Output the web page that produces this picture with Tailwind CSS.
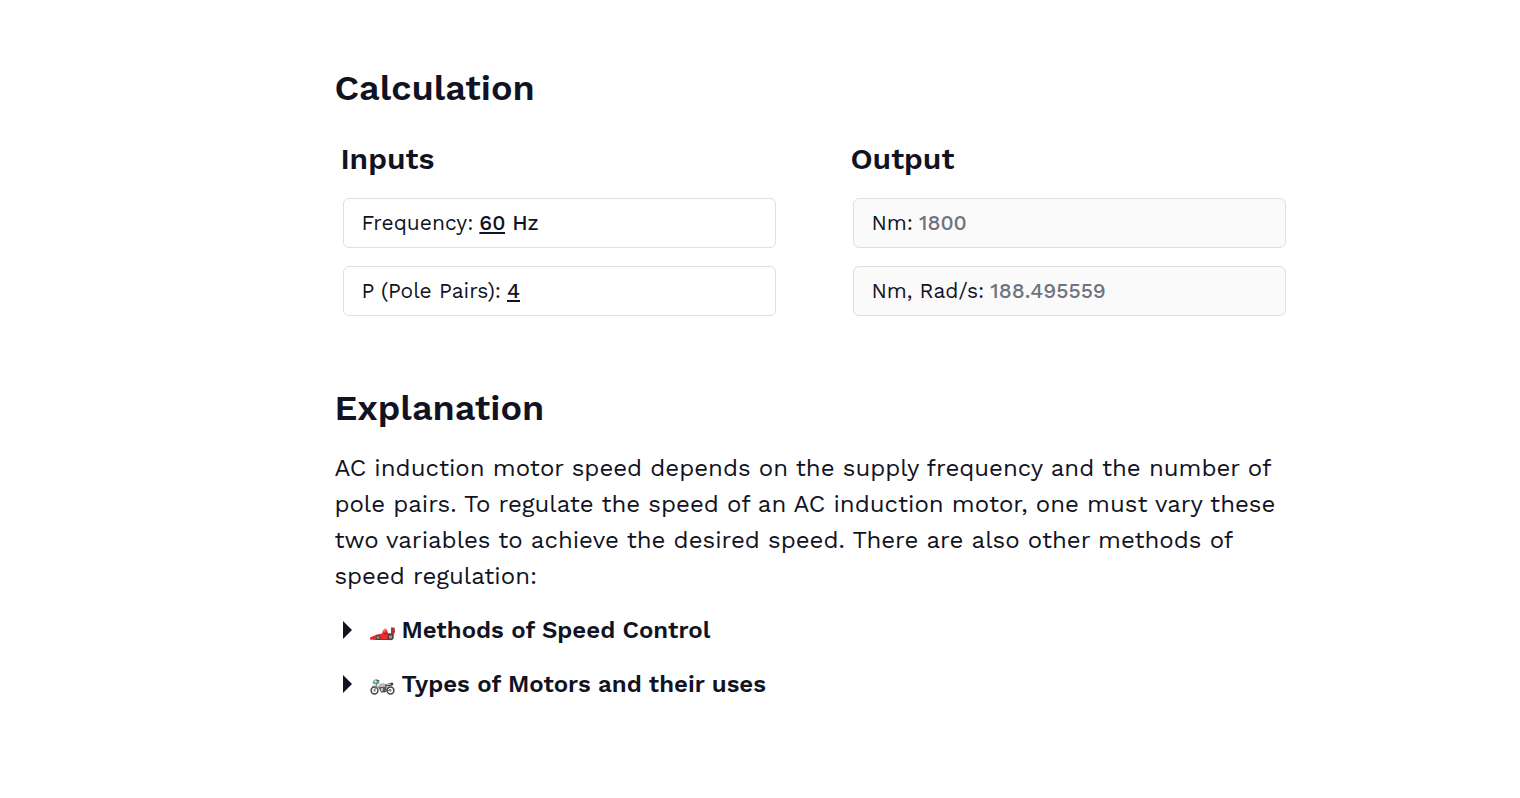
<!DOCTYPE html>
<html lang="en">
<head>
    <meta charset="UTF-8">
    <meta name="viewport" content="width=device-width, initial-scale=1.0">
    <title>Motor Speed Calculator</title>
    <script src="https://cdn.jsdelivr.net/npm/@tailwindcss/browser@4"></script>
</head>
<body class="bg-white font-['Work_Sans',Inter,sans-serif] text-[#111322]">
    <main class="ml-[22%] mr-8 max-w-[952px] pt-16 pb-20">
        <section>
            <h2 class="text-4xl leading-12 font-semibold">Calculation</h2>
            <div class="grid grid-cols-2 gap-[68px] mt-6">
                <div class="flex flex-col">
                    <h3 class="ml-1.5 text-3xl leading-[46px] font-semibold">Inputs</h3>
                    <div class="flex flex-col gap-[18px] mt-4 ml-[9px]">
                        <div class="flex items-center gap-1.5 h-[50px] px-[17px] border border-[#dfdfe2] rounded-md text-[21px]">
                            <label for="frequency">Frequency:</label>
                            <span class="font-medium"><input type="text" id="frequency" value="60" class="field-sizing-content underline underline-offset-2 decoration-2"> Hz</span>
                        </div>
                        <div class="flex items-center gap-1.5 h-[50px] px-[17px] border border-[#dfdfe2] rounded-md text-[21px]">
                            <label for="polePairs">P (Pole Pairs):</label>
                            <input type="text" id="polePairs" value="4" class="field-sizing-content font-medium underline underline-offset-2 decoration-2">
                        </div>
                    </div>
                </div>
                <div class="flex flex-col">
                    <h3 class="ml-1.5 text-3xl leading-[46px] font-semibold">Output</h3>
                    <div class="flex flex-col gap-[18px] mt-4 ml-[9px]">
                        <div class="flex items-center gap-1.5 h-[50px] px-[17px] border border-[#dfdfe2] rounded-md bg-[#fafafa] text-[21px]">
                            <label for="speed">Nm:</label>
                            <output id="speed" class="font-medium text-[#70727d]">1800</output>
                        </div>
                        <div class="flex items-center gap-1.5 h-[50px] px-[17px] border border-[#dfdfe2] rounded-md bg-[#fafafa] text-[21px]">
                            <label for="speedRad">Nm, Rad/s:</label>
                            <output id="speedRad" class="font-medium text-[#70727d]">188.495559</output>
                        </div>
                    </div>
                </div>
            </div>
        </section>

        <section class="mt-[68px]">
            <h2 class="text-4xl leading-12 font-semibold">Explanation</h2>
            <p class="mt-[18px] text-2xl leading-9">AC induction motor speed depends on the supply frequency and the number of pole pairs. To regulate the speed of an AC induction motor, one must vary these two variables to achieve the desired speed. There are also other methods of speed regulation:</p>
            <details class="mt-[18px] group">
                <summary class="flex items-center pl-[9px] text-2xl leading-9 font-semibold cursor-pointer">
                    <svg class="w-2.5 h-[18px] mr-4 group-open:rotate-90" viewBox="0 0 10 18" fill="currentColor"><path d="M0 0L9 9L0 18Z"/></svg>
                    <svg class="w-7 h-6 mr-1" viewBox="1 -1 28 24">
                        <path d="M23 8.5h3.500l.5 4-1.500 4h-2.500z" fill="#c32634"/>
                        <path d="M24 10h2v2h-2z" fill="#74465c"/>
                        <path d="M2 20l1-2 6-2.500 5-1 1-3 2-1.500 2 1 1 3 4 .5 1.500 2-1 3-6 1-12 .5z" fill="#ef2b2f"/>
                        <path d="M15 13l1-3 1.500-.5 1 1.500-2 2.500z" fill="#ff6466"/>
                        <path d="M15 14.500l4-1 1 1.500-4 .8z" fill="#b21d27"/>
                        <path d="M2 18.500h4v2h-4z" fill="#e12631"/>
                        <path d="M8 20h14l-1 1h-12z" fill="#8b3034"/>
                        <circle cx="10" cy="18.500" r="2.500" fill="#49413c"/>
                        <circle cx="10" cy="18.500" r="1.300" fill="#a49a88"/>
                        <circle cx="22.500" cy="18" r="3.200" fill="#49413c"/>
                        <circle cx="22.500" cy="18" r="1.700" fill="#a49a88"/>
                    </svg>
                    Methods of Speed Control
                </summary>
            </details>
            <details class="mt-[18px] group">
                <summary class="flex items-center pl-[9px] text-2xl leading-9 font-semibold cursor-pointer">
                    <svg class="w-2.5 h-[18px] mr-4 group-open:rotate-90" viewBox="0 0 10 18" fill="currentColor"><path d="M0 0L9 9L0 18Z"/></svg>
                    <svg class="w-7 h-6 mr-1" viewBox="1 -1 28 24" fill="none">
                        <circle cx="6.500" cy="17.500" r="3.400" stroke="#444" stroke-width="1.500"/>
                        <circle cx="22.500" cy="17.500" r="3.400" stroke="#444" stroke-width="1.500"/>
                        <circle cx="6.500" cy="17.500" r="1.200" fill="#999"/>
                        <circle cx="22.500" cy="17.500" r="1.200" fill="#999"/>
                        <path d="M6.500 17.500l2.500-7M10 13l3 5h6l3.500-1M17 12.500l5 4.500" stroke="#66676a"/>
                        <path d="M4 13.500q3-2 6 1.500" stroke="#888"/>
                        <path d="M11 13.500h7l1 4-2 2h-4z" fill="#5a5a5c"/>
                        <path d="M13 15h2v3h-2z" fill="#c4c4c4"/>
                        <path d="M10.500 11l5-1 2.500 1.500-2 2h-5z" fill="#b9bebb"/>
                        <path d="M17 11.500l7-2 1.500 1-1 2-7 1z" fill="#3b3939"/>
                        <path d="M18 11.500l5-1v1l-5 1z" fill="#d2d2d2"/>
                        <path d="M4.500 9.500l2-3h3l2 3-2 2-4-.5z" fill="#5f9c88"/>
                        <path d="M6 9l1.500-2 1.500 1-1 2z" fill="#d1ded8"/>
                        <path d="M8.500 7l3 1" stroke="#444"/>
                    </svg>
                    Types of Motors and their uses
                </summary>
            </details>
        </section>
    </main>
</body>
</html>
